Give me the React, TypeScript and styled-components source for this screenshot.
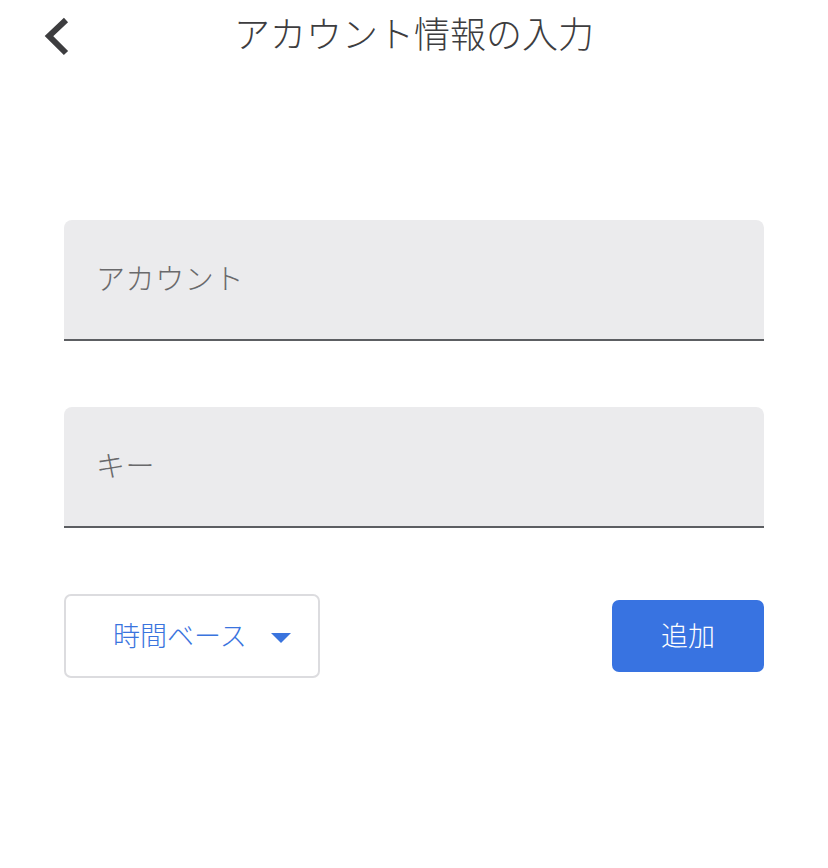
import React from "react";
import styled, { createGlobalStyle } from "styled-components";

const Global = createGlobalStyle`
  html, body { margin: 0; padding: 0; background: #ffffff; }
  body { font-family: "Noto Sans CJK JP", "Noto Sans", sans-serif; }
  * { box-sizing: border-box; }
`;

const Page = styled.div`
  width: 828px;
  height: 868px;
  background: #fff;
  display: flex;
  flex-direction: column;
`;

const Header = styled.header`
  position: relative;
  height: 68px;
  display: flex;
  align-items: center;
  justify-content: center;
`;

const BackButton = styled.button`
  position: absolute;
  left: 38px;
  top: 14px;
  width: 36px;
  height: 44px;
  border: none;
  background: none;
  padding: 0;
  display: flex;
  align-items: center;
  justify-content: center;
  cursor: pointer;
`;

const Title = styled.h1`
  margin: 0;
  font-size: 36px;
  font-weight: 300;
  color: #3d3d3f;
  line-height: 1;
  letter-spacing: 0;
  transform: translateY(-2px);
`;

const Form = styled.div`
  padding: 152px 64px 0;
  display: flex;
  flex-direction: column;
  gap: 66px;
`;

const Field = styled.div`
  height: 121px;
  background: #ebebed;
  border-radius: 8px 8px 0 0;
  border-bottom: 2px solid #5c5e62;
  display: flex;
  align-items: center;
  padding-left: 32px;
`;

const Placeholder = styled.span`
  font-size: 29px;
  font-weight: 300;
  color: #69696b;
  line-height: 1;
  letter-spacing: 0.6px;
  transform: translateY(-2px);
`;

const Actions = styled.div`
  display: flex;
  justify-content: space-between;
  align-items: center;
`;

const Select = styled.button`
  width: 256px;
  height: 84px;
  border: 2px solid #dcdcdf;
  border-radius: 7px;
  background: #fff;
  display: flex;
  align-items: center;
  padding: 0 0 0 47px;
  gap: 24px;
  font-family: inherit;
  cursor: pointer;
`;

const SelectLabel = styled.span`
  font-size: 27px;
  font-weight: 300;
  color: #3a74de;
  line-height: 1;
  transform: translateY(-2px);
`;

const Caret = styled.span`
  width: 0;
  height: 0;
  border-left: 10px solid transparent;
  border-right: 10px solid transparent;
  border-top: 10px solid #3a74de;
  margin-top: 4px;
`;

const AddButton = styled.button`
  width: 152px;
  height: 72px;
  border: none;
  border-radius: 7px;
  background: #3873e1;
  color: #fff;
  font-family: inherit;
  font-size: 27px;
  font-weight: 300;
  line-height: 1;
  padding: 0 0 4px;
  cursor: pointer;
  display: flex;
  align-items: center;
  justify-content: center;
`;

export default function App() {
  return (
    <Page>
      <Global />
      <Header>
        <BackButton aria-label="戻る">
          <svg width="30" height="40" viewBox="0 0 30 40">
            <polyline
              points="25,4 8,20 25,37"
              fill="none"
              stroke="#3d3d3f"
              strokeWidth="6"
              strokeLinecap="butt"
              strokeLinejoin="miter"
            />
          </svg>
        </BackButton>
        <Title>アカウント情報の入力</Title>
      </Header>
      <Form>
        <Field>
          <Placeholder>アカウント</Placeholder>
        </Field>
        <Field>
          <Placeholder>キー</Placeholder>
        </Field>
        <Actions>
          <Select>
            <SelectLabel>時間ベース</SelectLabel>
            <Caret />
          </Select>
          <AddButton>追加</AddButton>
        </Actions>
      </Form>
    </Page>
  );
}
